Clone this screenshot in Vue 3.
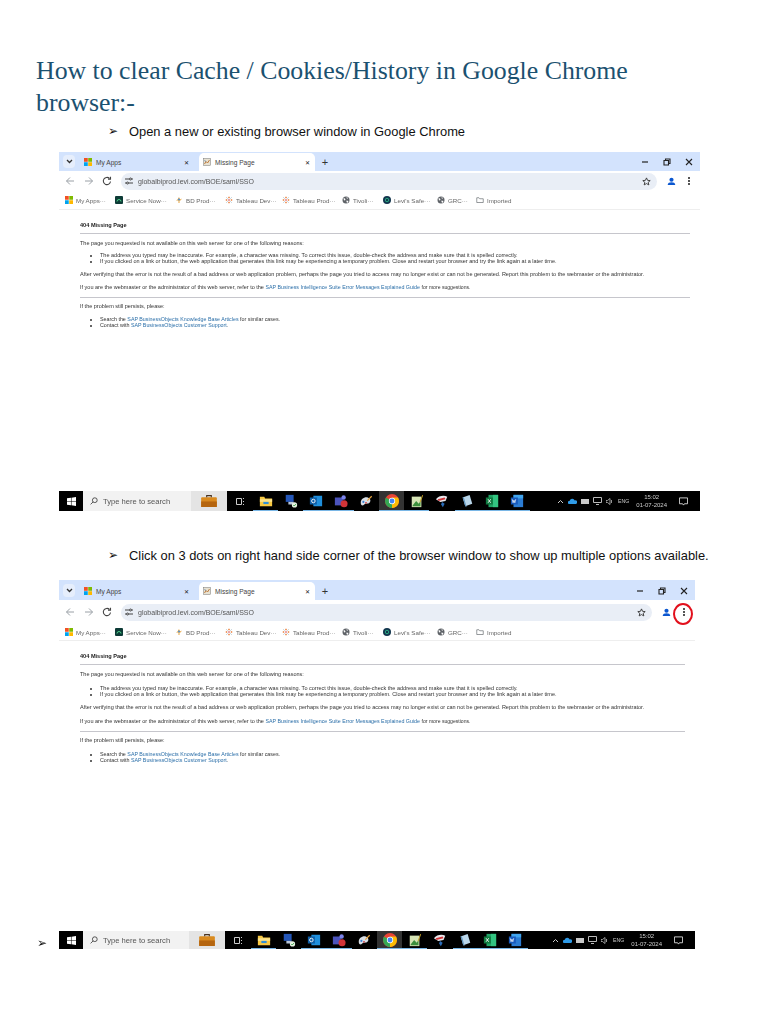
<template>
  <div class="page">
    <svg class="defs" width="0" height="0">
      <defs>
        <symbol id="ms" viewBox="0 0 16 16">
          <rect width="7.5" height="7.5" fill="#f25022" />
          <rect x="8.5" width="7.5" height="7.5" fill="#7fba00" />
          <rect y="8.5" width="7.5" height="7.5" fill="#00a4ef" />
          <rect x="8.5" y="8.5" width="7.5" height="7.5" fill="#ffb900" />
        </symbol>
        <symbol id="page" viewBox="0 0 16 16">
          <rect x="1" y="1" width="14" height="14" fill="#e8e2d2" stroke="#777" />
          <path d="M3 12l3-5 3 3 4-6" fill="none" stroke="#b5651d" stroke-width="1.6" />
          <path d="M3 5l3 2" stroke="#3a6ea5" stroke-width="1.4" />
        </symbol>
        <symbol id="now" viewBox="0 0 16 16">
          <rect width="16" height="16" rx="2" fill="#0d3b36" />
          <path d="M4 11a4 4 0 1 1 8 0" fill="none" stroke="#4fd18b" stroke-width="2" />
        </symbol>
        <symbol id="bd" viewBox="0 0 16 16">
          <path d="M8 2l2 5 4-2-3 4H9v5H7V9H2l3-2z" fill="#e8a33d" />
          <circle cx="8" cy="7" r="2" fill="#4a90d9" />
        </symbol>
        <symbol id="tableau" viewBox="0 0 16 16">
          <path d="M8 1v4M6 3h4M8 11v4M6 13h4M1 8h4M3 6v4M11 8h4M13 6v4" stroke="#e8762d" stroke-width="1.2" />
          <path d="M3 3l2 2M13 3l-2 2M3 13l2-2M13 13l-2-2" stroke="#5b879b" stroke-width="1.2" />
          <path d="M6.5 8h3M8 6.500v3" stroke="#c72037" stroke-width="1.2" />
        </symbol>
        <symbol id="globe" viewBox="0 0 16 16">
          <circle cx="8" cy="8" r="7" fill="#5f6368" />
          <path d="M3 4l3 1 1 3-3 1zM9 2l3 2-2 2zM9 9l4 1-2 4-2-2z" fill="#fff" />
        </symbol>
        <symbol id="safe" viewBox="0 0 16 16">
          <circle cx="8" cy="8" r="8" fill="#12354d" />
          <circle cx="8" cy="8" r="3.500" fill="none" stroke="#30c48d" stroke-width="1.6" />
        </symbol>
        <symbol id="folder" viewBox="0 0 16 16">
          <path d="M1.500 3.500h4.500l1.500 2h7v7.500h-13z" fill="none" stroke="#5f6368" stroke-width="1.3" />
        </symbol>
        <symbol id="explorer" viewBox="0 0 16 16">
          <path d="M1 3h5l1 2h8v9H1z" fill="#f7c843" />
          <rect x="1" y="6" width="14" height="3" fill="#fbe28b" />
          <rect x="5" y="9" width="6" height="2.500" fill="#2f8fd8" />
        </symbol>
        <symbol id="pc" viewBox="0 0 16 16">
          <rect x="2" y="1" width="9" height="8" fill="#2456b8" />
          <rect x="5" y="9" width="6" height="3" fill="#b9c6d8" />
          <circle cx="12" cy="12.500" r="3" fill="#e8f3e2" />
          <path d="M10.500 12.500l1.200 1.200 2-2.200" stroke="#2c9a3d" fill="none" />
        </symbol>
        <symbol id="outlook" viewBox="0 0 16 16">
          <rect x="5" y="2" width="10" height="12" fill="#1f8fdc" />
          <rect x="1" y="4" width="8" height="8" fill="#0f5fa8" />
          <circle cx="5" cy="8" r="2" fill="none" stroke="#fff" />
        </symbol>
        <symbol id="teams" viewBox="0 0 16 16">
          <rect x="1" y="4" width="9" height="9" fill="#4b53bc" />
          <circle cx="11" cy="4" r="2.500" fill="#7b83eb" />
          <circle cx="11.500" cy="11" r="4" fill="#d13438" />
        </symbol>
        <symbol id="paint" viewBox="0 0 16 16">
          <path d="M2 10c0-4 4-7 8-6 3 1 4 4 2 6-2 2-4 0-6 2s-4 1-4-2z" fill="#d8dee6" />
          <path d="M9 7l5-5 1 1-5 5z" fill="#e8a33d" />
          <circle cx="5" cy="9" r="1.200" fill="#3a82d6" />
          <circle cx="8" cy="10" r="1" fill="#d13438" />
        </symbol>
        <symbol id="chrome" viewBox="0 0 16 16">
          <circle cx="8" cy="8" r="8" fill="#ea4335" />
          <path d="M8 8L1.100 4A8 8 0 0 0 8 16l3.500-6z" fill="#34a853" />
          <path d="M8 16a8 8 0 0 0 6.900-12H8z" fill="#fbbc05" />
          <circle cx="8" cy="8" r="3.600" fill="#fff" />
          <circle cx="8" cy="8" r="2.800" fill="#4285f4" />
        </symbol>
        <symbol id="notepad" viewBox="0 0 16 16">
          <rect x="2" y="3" width="11" height="12" fill="#d6e4b5" />
          <path d="M3 13l4-5 3 3 2-3v6H3z" fill="#3c8f3c" />
          <path d="M11 9l3-8 1 .5-3 8z" fill="#c9a227" />
        </symbol>
        <symbol id="snip" viewBox="0 0 16 16">
          <path d="M1 6c3-4 9-5 13-3l-2 5-6 1z" fill="#e9e9ee" />
          <path d="M3 6l8-2 1 2-8 2z" fill="#d13438" />
          <path d="M8 9l3 2-2 4-2-3z" fill="#2b6cb8" />
        </symbol>
        <symbol id="note" viewBox="0 0 16 16">
          <path d="M3 4l8-3 3 10-8 3z" fill="#b9d6ea" />
          <path d="M3 4l3 10 1.500 1-3-11z" fill="#5d93bd" />
        </symbol>
        <symbol id="excel" viewBox="0 0 16 16">
          <rect x="4" y="1" width="11" height="14" fill="#21a366" />
          <rect x="9" y="1" width="6" height="14" fill="#33c481" />
          <rect x="1" y="4" width="8" height="8" fill="#107c41" />
          <path d="M3.500 6l3 4M6.500 6l-3 4" stroke="#fff" />
        </symbol>
        <symbol id="word" viewBox="0 0 16 16">
          <rect x="4" y="1" width="11" height="14" fill="#2b7cd3" />
          <rect x="4" y="1" width="11" height="4" fill="#41a5ee" />
          <rect x="1" y="4" width="8" height="8" fill="#185abd" />
          <path d="M2.500 6l1 4 1-3 1 3 1-4" stroke="#fff" fill="none" stroke-width=".8" />
        </symbol>
      </defs>
    </svg>

    <h1 class="title">How to clear Cache / Cookies/History in Google Chrome browser:-</h1>

    <template v-for="shot in shots" :key="shot.step">
      <p class="step"><span class="arrow">➢</span>{{ shot.step }}</p>

      <div class="shot" :class="shot.cls">
        <div class="tabstrip">
          <span class="tab-menu">
            <svg width="7" height="5" viewBox="0 0 7 5"><path d="M1 1l2.500 2.500L6 1" fill="none" stroke="#333" stroke-width="1.300" /></svg>
          </span>
          <div class="tab idle">
            <svg class="fav"><use href="#ms" /></svg>
            <span class="tab-label">My Apps</span>
            <span class="tab-x">✕</span>
          </div>
          <div class="tab active">
            <svg class="fav"><use href="#page" /></svg>
            <span class="tab-label">Missing Page</span>
            <span class="tab-x">✕</span>
          </div>
          <span class="tab-plus">+</span>
          <div class="win-btns">
            <svg width="8" height="8" viewBox="0 0 8 8"><path d="M1 4h6" stroke="#222" stroke-width="1.200" /></svg>
            <svg width="8" height="8" viewBox="0 0 8 8"><path d="M1 2.500h4.500V7H1zM2.500 2.500V1H7v4.500H5.500" fill="none" stroke="#222" stroke-width="1.100" /></svg>
            <svg width="8" height="8" viewBox="0 0 8 8"><path d="M1 1l6 6M7 1L1 7" stroke="#222" stroke-width="1.100" /></svg>
          </div>
        </div>

        <div class="toolbar">
          <svg class="nav" viewBox="0 0 10 10"><path d="M9 5H1.500M5 1.500L1.500 5 5 8.500" fill="none" stroke="#9aa0a6" stroke-width="1" /></svg>
          <svg class="nav" viewBox="0 0 10 10"><path d="M1 5h7.500M5 1.500L8.500 5 5 8.500" fill="none" stroke="#9aa0a6" stroke-width="1" /></svg>
          <svg class="nav" viewBox="0 0 10 10"><path d="M8.500 5.500A3.600 3.600 0 1 1 7.500 2.500M8.500 .800v2.500H6" fill="none" stroke="#444" stroke-width="1.100" /></svg>
          <div class="omni">
            <svg width="8" height="8" viewBox="0 0 8 8"><path d="M0 2h4.500M6.500 2H8M0 6h1.500M3.500 6H8" stroke="#444" /><circle cx="5.500" cy="2" r="1" fill="none" stroke="#444" /><circle cx="2.500" cy="6" r="1" fill="none" stroke="#444" /></svg>
            <span class="url">globalbiprod.levi.com/BOE/saml/SSO</span>
            <svg class="star" width="9" height="9" viewBox="0 0 10 10"><path d="M5 1l1.200 2.700 2.900.3-2.200 1.900.7 2.900L5 7.300 2.400 8.800l.7-2.900L.9 4l2.900-.3z" fill="none" stroke="#333" stroke-width="1" /></svg>
          </div>
          <span class="avatar">
            <svg width="9" height="9" viewBox="0 0 10 10"><circle cx="5" cy="3" r="2.300" fill="#0b57d0" /><path d="M.8 9c0-2.600 2-3.300 4.200-3.300S9.200 6.400 9.200 9z" fill="#0b57d0" /></svg>
          </span>
          <span class="dots"><i></i><i></i><i></i></span>
          <span v-if="shot.circled" class="ring"></span>
        </div>

        <div class="bookmarks">
          <span v-for="b in bookmarks" :key="b.label" class="bookmark" :style="{ width: b.width + 'px' }">
            <svg class="fav"><use :href="'#' + b.icon" /></svg>{{ b.label }}
          </span>
        </div>

        <div class="content">
          <h2>404 Missing Page</h2>
          <hr>
          <p>The page you requested is not available on this web server for one of the following reasons:</p>
          <ul class="reasons">
            <li>The address you typed may be inaccurate. For example, a character was missing. To correct this issue, double-check the address and make sure that it is spelled correctly.</li>
            <li>If you clicked on a link or button, the web application that generates this link may be experiencing a temporary problem. Close and restart your browser and try the link again at a later time.</li>
          </ul>
          <p>After verifying that the error is not the result of a bad address or web application problem, perhaps the page you tried to access may no longer exist or can not be generated. Report this problem to the webmaster or the administrator.</p>
          <p>If you are the webmaster or the administrator of this web server, refer to the <a>SAP Business Intelligence Suite Error Messages Explained Guide</a> <span class="tail">for more suggestions.</span></p>
          <hr class="lower">
          <p>If the problem still persists, please:</p>
          <ul class="support">
            <li>Search the <a>SAP BusinessObjects Knowledge Base Articles</a> for similar cases.</li>
            <li>Contact with <a>SAP BusinessObjects Customer Support</a>.</li>
          </ul>
        </div>

        <div class="taskbar">
          <span v-if="shot.circled" class="stray">➢</span>
          <span class="start">
            <svg width="9" height="9" viewBox="0 0 10 10"><path d="M0 1.400l4.400-.6v3.900H0zM5 .7L10 0v4.700H5zM0 5.300h4.400v3.900L0 8.600zM5 5.300h5V10l-5-.7z" fill="#fff" /></svg>
          </span>
          <div class="search">
            <svg width="8" height="8" viewBox="0 0 10 10"><circle cx="6" cy="4" r="3" fill="none" stroke="#333" /><path d="M3.800 6.200L.8 9.200" stroke="#333" /></svg>
            <span class="search-text">Type here to search</span>
            <span class="brief">
              <svg width="16" height="12" viewBox="0 0 17 13"><rect y="2.500" width="17" height="10.500" rx="1" fill="#d98a1f" /><rect y="7" width="17" height="6" fill="#b5650f" /><path d="M6 2.500V.700h5v1.800" fill="none" stroke="#4a3320" stroke-width="1.200" /></svg>
            </span>
          </div>
          <span class="task-view">
            <svg width="9" height="9" viewBox="0 0 9 9"><path d="M.5 1.500h5v6h-5zM7.500 1v1M7.500 4v1M7.500 7v1" fill="none" stroke="#ccc" /></svg>
          </span>
          <span v-for="t in tasks" :key="t.icon" class="task" :class="{ running: t.running, focused: t.icon === 'chrome' }">
            <svg width="14" height="14"><use :href="'#' + t.icon" /></svg>
          </span>
          <div class="tray">
            <svg width="7" height="5" viewBox="0 0 7 5"><path d="M1 4l2.500-2.500L6 4" fill="none" stroke="#ccc" /></svg>
            <svg width="9" height="6" viewBox="0 0 9 6"><path d="M1 6a1.500 1.500 0 0 1 .5-3A2.800 2.800 0 0 1 6.800 2.500 1.800 1.800 0 0 1 8 6z" fill="#2f9be8" /></svg>
            <svg width="8" height="6" viewBox="0 0 8 6"><rect y="1" width="8" height="5" fill="#c9c9c9" /></svg>
            <svg width="9" height="8" viewBox="0 0 9 8"><path d="M.5.500h8v5h-8zM3 7.500h3" fill="none" stroke="#bbb" /></svg>
            <svg width="8" height="7" viewBox="0 0 8 7"><path d="M0 2.500h1.500L4 .5v6L1.500 4.500H0zM5.500 2v3" fill="none" stroke="#bbb" stroke-width=".8" /></svg>
            <span class="lang">ENG</span>
            <span class="clock"><span>15:02</span><span>01-07-2024</span></span>
            <svg class="notify" width="9" height="9" viewBox="0 0 10 10"><path d="M.5 1h9v6.500H6L5 9 4 7.500H.5z" fill="none" stroke="#ddd" /></svg>
          </div>
        </div>
      </div>
    </template>
  </div>
</template>

<script setup>
const shots = [
  { step: 'Open a new or existing browser window in Google Chrome', cls: 'first', circled: false },
  { step: 'Click on 3 dots on right hand side corner of the browser window to show up multiple options available.', cls: 'second', circled: true },
]

const bookmarks = [
  { icon: 'ms', label: 'My Apps···', width: 50 },
  { icon: 'now', label: 'Service Now···', width: 60 },
  { icon: 'bd', label: 'BD Prod···', width: 50 },
  { icon: 'tableau', label: 'Tableau Dev···', width: 57 },
  { icon: 'tableau', label: 'Tableau Prod···', width: 60 },
  { icon: 'globe', label: 'Tivoli···', width: 41 },
  { icon: 'safe', label: "Levi's Safe···", width: 54 },
  { icon: 'globe', label: 'GRC···', width: 39 },
  { icon: 'folder', label: 'Imported', width: 50 },
]

const tasks = [
  { icon: 'explorer', running: true },
  { icon: 'pc', running: false },
  { icon: 'outlook', running: true },
  { icon: 'teams', running: true },
  { icon: 'paint', running: false },
  { icon: 'chrome', running: true },
  { icon: 'notepad', running: true },
  { icon: 'snip', running: false },
  { icon: 'note', running: true },
  { icon: 'excel', running: true },
  { icon: 'word', running: true },
]
</script>

<style>
html, body {
  background: #fff;
}
</style>

<style scoped>
.page {
  height: 1024px;
  overflow: hidden;
  padding: 55px 0 0 36px;
  box-sizing: border-box;
  font-family: "Liberation Sans", Arial, sans-serif;
}
.defs {
  position: absolute;
}
.title {
  width: 620px;
  margin: 0 0 4px;
  font-family: "Liberation Serif", "Times New Roman", serif;
  font-size: 25.8px;
  line-height: 32px;
  font-weight: 400;
  color: #1b5170;
}
.step {
  display: flex;
  align-items: center;
  margin: 0 0 13px 72px;
  height: 16px;
  font-size: 12.9px;
  color: #111;
  white-space: nowrap;
}
.arrow {
  width: 21px;
  font-family: "DejaVu Sans", sans-serif;
  font-size: 12px;
}
.shot {
  margin-left: 23px;
  display: flex;
  flex-direction: column;
  filter: blur(0.35px);
}
.shot.first {
  width: 641px;
  height: 359px;
  margin-bottom: 36px;
}
.shot.second {
  width: 636px;
  height: 369px;
  margin-top: 17px;
}
.fav {
  width: 8px;
  height: 8px;
  flex: none;
}

.tabstrip {
  height: 19px;
  background: #d3e3fd;
  display: flex;
  align-items: flex-end;
  font-size: 6.6px;
  color: #444;
  flex: none;
}
.second .tabstrip {
  height: 20px;
}
.tab-menu {
  width: 12px;
  height: 13px;
  margin: 0 0 3px 4px;
  border-radius: 4px;
  background: #e6eefc;
  display: flex;
  align-items: center;
  justify-content: center;
}
.tab {
  height: 18px;
  box-sizing: border-box;
  display: flex;
  align-items: center;
  gap: 4px;
}
.tab.idle {
  width: 119px;
  margin-left: 5px;
  padding: 0 10px 0 4px;
}
.tab.active {
  width: 116px;
  padding: 0 5px 0 4px;
  background: #fff;
  border-radius: 5px 5px 0 0;
}
.tab-label {
  flex: 1;
}
.tab-x {
  font-size: 6px;
  color: #222;
}
.tab-plus {
  margin: 0 0 2px 5px;
  width: 10px;
  height: 14px;
  font-size: 11px;
  line-height: 14px;
  color: #333;
  text-align: center;
}
.win-btns {
  margin-left: auto;
  padding-right: 7px;
  height: 18px;
  display: flex;
  align-items: center;
  gap: 14px;
}

.toolbar {
  position: relative;
  height: 20px;
  display: flex;
  align-items: center;
  padding: 0 6.5px 0 6px;
  gap: 8.5px;
  flex: none;
}
.second .toolbar {
  height: 24px;
}
.nav {
  width: 10px;
  height: 10px;
  flex: none;
}
.omni {
  flex: 1;
  height: 17px;
  padding: 0 6.5px 0 4px;
  border-radius: 9px;
  background: #e9eef6;
  display: flex;
  align-items: center;
  gap: 5.5px;
}
.url {
  font-size: 7px;
  color: #555;
}
.star {
  margin-left: auto;
}
.avatar {
  margin-left: 1px;
  display: flex;
}
.dots {
  margin-left: 0.5px;
  width: 9px;
  display: flex;
  flex-direction: column;
  align-items: center;
  gap: 1.5px;
}
.dots i {
  width: 1.6px;
  height: 1.6px;
  border-radius: 50%;
  background: #333;
}
.ring {
  position: absolute;
  right: 2px;
  top: 3px;
  width: 20px;
  height: 22px;
  box-sizing: border-box;
  border: 2px solid #e2101c;
  border-radius: 50%;
}

.bookmarks {
  height: 19px;
  display: flex;
  align-items: center;
  padding-left: 6px;
  font-size: 6.2px;
  color: #666;
  border-bottom: 1px solid #eeeeee;
  box-sizing: border-box;
  white-space: nowrap;
  flex: none;
}
.second .bookmarks {
  height: 17px;
}
.bookmark {
  display: flex;
  align-items: center;
  gap: 3px;
  flex: none;
}

.content {
  flex: 1;
  padding: 12px 10px 0 21px;
  font-size: 5.52px;
  line-height: 6px;
  color: #333;
  white-space: nowrap;
}
.content h2 {
  margin: 0;
  font-size: 5.6px;
  line-height: 6px;
  color: #222;
}
.content hr {
  margin: 5px 0 6px;
  border: 0;
  height: 1px;
  background: #c6c6cc;
}
.content hr.lower {
  margin-bottom: 5px;
}
.content p {
  margin: 0 0 7px;
}
.content ul {
  margin: 0 0 7px;
  padding-left: 20px;
}
.first .content .reasons {
  margin-top: -1px;
}
.content .support {
  font-size: 5.35px;
}
.content a {
  font-size: 5.3px;
  color: #2a6ea8;
}
.tail {
  font-size: 5.1px;
}
.second .content p,
.second .content ul {
  margin-bottom: 7.5px;
}

.taskbar {
  position: relative;
  height: 20px;
  background: #000;
  display: flex;
  align-items: stretch;
  flex: none;
}
.second .taskbar {
  height: 18px;
}
.stray {
  position: absolute;
  left: -22px;
  top: 6px;
  font-family: "DejaVu Sans", sans-serif;
  font-size: 12px;
  line-height: 12px;
  color: #111;
}
.start {
  width: 24px;
  display: flex;
  align-items: center;
  justify-content: center;
}
.search {
  width: 144px;
  display: flex;
  align-items: center;
  background: #f2f2f2;
  padding-left: 7px;
  gap: 5px;
  box-sizing: border-box;
}
.second .search {
  width: 142px;
}
.search-text {
  flex: 1;
  font-size: 7.6px;
  color: #555;
}
.brief {
  width: 36px;
  align-self: stretch;
  background: #e4e4e4;
  display: flex;
  align-items: center;
  justify-content: center;
}
.task-view {
  width: 26px;
  display: flex;
  align-items: center;
  justify-content: center;
}
.task {
  width: 25.2px;
  display: flex;
  align-items: center;
  justify-content: center;
  box-sizing: border-box;
}
.task.running {
  border-bottom: 1px solid #7ab7e6;
}
.task.focused {
  background: #333;
}
.tray {
  margin-left: auto;
  padding-right: 12px;
  display: flex;
  align-items: center;
  gap: 4px;
  color: #ccc;
  font-size: 5.2px;
}
.clock {
  margin-left: 3px;
  display: flex;
  flex-direction: column;
  align-items: center;
  gap: 2px;
  font-size: 6px;
  line-height: 6px;
}
.notify {
  margin-left: 8px;
}
</style>
